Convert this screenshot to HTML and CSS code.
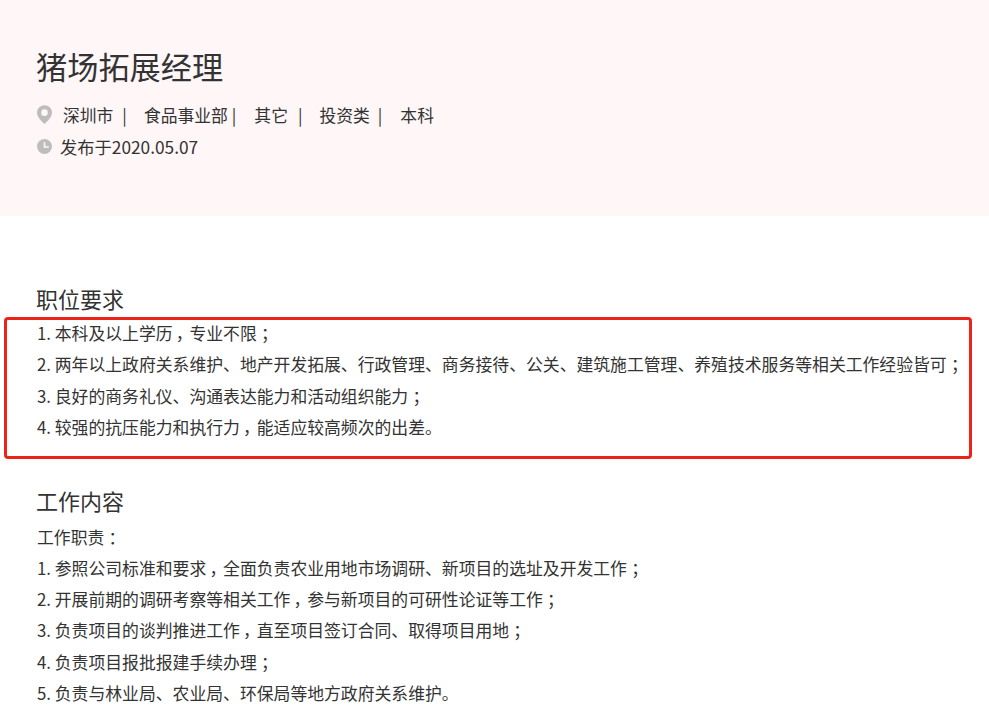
FILE: index.html
```html
<!DOCTYPE html>
<html lang="zh-CN">
<head>
<meta charset="utf-8">
<title>猪场拓展经理</title>
<link rel="stylesheet" href="styles.css">
</head>
<body>
<header class="hero">
  <h1 class="job-title">猪场拓展经理</h1>
  <div class="meta-row">
    <svg class="icon-pin" viewBox="0 0 16 20" width="15" height="19"><path fill-rule="evenodd" fill="#bdbdbd" d="M8 0a8 8 0 0 1 8 8c0 4.600-5 9.500-8 12C5 17.500 0 12.600 0 8a8 8 0 0 1 8-8zm0 4.500a3.500 3.500 0 1 0 0 7 3.500 3.500 0 0 0 0-7z"/></svg>
    <span class="tag tag-first">深圳市</span><span class="sep sep-a">|</span>
    <span class="tag tag-b">食品事业部</span><span class="sep sep-b">|</span>
    <span class="tag tag-c">其它</span><span class="sep sep-c">|</span>
    <span class="tag tag-d">投资类</span><span class="sep sep-d">|</span>
    <span class="tag tag-e">本科</span>
  </div>
  <div class="date-row">
    <svg class="icon-clock" viewBox="0 0 14 14" width="15" height="15"><circle cx="7" cy="7" r="7" fill="#bdbdbd"/><path d="M7 3v4.500h4" fill="none" stroke="#fff6f7" stroke-width="1.500"/></svg>
    <span>发布于2020.05.07</span>
  </div>
</header>
<main class="content">
  <section class="block block-req">
    <h2 class="block-title">职位要求</h2>
    <div class="list-wrap">
      <p>1. 本科及以上学历<span class="pc">，</span>专业不限<span class="pc">；</span></p>
      <p>2. 两年以上政府关系维护、地产开发拓展、行政管理、商务接待、公关、建筑施工管理、养殖技术服务等相关工作经验皆可<span class="pc">；</span></p>
      <p>3. 良好的商务礼仪、沟通表达能力和活动组织能力<span class="pc">；</span></p>
      <p>4. 较强的抗压能力和执行力<span class="pc">，</span>能适应较高频次的出差。</p>
      <div class="highlight"></div>
    </div>
  </section>
  <section class="block">
    <h2 class="block-title">工作内容</h2>
    <p>工作职责<span class="pc">：</span></p>
    <p>1. 参照公司标准和要求<span class="pc">，</span>全面负责农业用地市场调研、新项目的选址及开发工作<span class="pc">；</span></p>
    <p>2. 开展前期的调研考察等相关工作<span class="pc">，</span>参与新项目的可研性论证等工作<span class="pc">；</span></p>
    <p>3. 负责项目的谈判推进工作<span class="pc">，</span>直至项目签订合同、取得项目用地<span class="pc">；</span></p>
    <p>4. 负责项目报批报建手续办理<span class="pc">；</span></p>
    <p>5. 负责与林业局、农业局、环保局等地方政府关系维护。</p>
  </section>
</main>
</body>
</html>
```
FILE: styles.css
```css
html, body {
  margin: 0;
  padding: 0;
  background: #fff;
  overflow: hidden;
}
body {
  height: 716px;
  font-family: "Noto Sans CJK SC", "Liberation Sans", sans-serif;
  color: #333;
  font-size: 16.800px;
}
.hero {
  height: 216px;
  box-sizing: border-box;
  background: #fff6f7;
  padding: 43px 37px 0;
}
.job-title {
  margin: 0 0 0 -1px;
  font-size: 31.200px;
  line-height: 46px;
  font-weight: 400;
}
.meta-row {
  display: flex;
  align-items: center;
  height: 31px;
  margin-top: 10px;
}
.icon-pin { flex: none; }
.tag-first { margin-left: 11px; }
.sep-a { margin-left: 9px; }
.tag-b { margin-left: 17px; }
.sep-b { margin-left: 4px; }
.tag-c { margin-left: 18px; }
.sep-c { margin-left: 10px; }
.tag-d { margin-left: 17px; }
.sep-d { margin-left: 8px; }
.tag-e { margin-left: 18px; }
.date-row {
  display: flex;
  align-items: center;
  height: 31px;
  margin-top: 1px;
  font-size: 17.300px;
}
.icon-clock { flex: none; margin-right: 8px; }
.content { padding: 65px 37px 0; font-size: 16.840px; }
.block { margin: 0; }
.block-req { margin-bottom: 40.400px; }
.block-title {
  margin: 0 0 4px -1px;
  font-size: 22px;
  line-height: 34px;
  font-weight: 400;
}
.block-req .block-title { margin-bottom: 2px; }
.content p {
  margin: 0;
  line-height: 31.300px;
  white-space: nowrap;
}
.list-wrap { position: relative; }
.highlight {
  position: absolute;
  left: -33px;
  right: -20px;
  top: 0;
  height: 142px;
  box-sizing: border-box;
  border: 3px solid #ec2418;
  border-radius: 4px;
}
.pc {
  display: inline-block;
  width: 1em;
  text-align: center;
  font-feature-settings: "palt";
}
```
